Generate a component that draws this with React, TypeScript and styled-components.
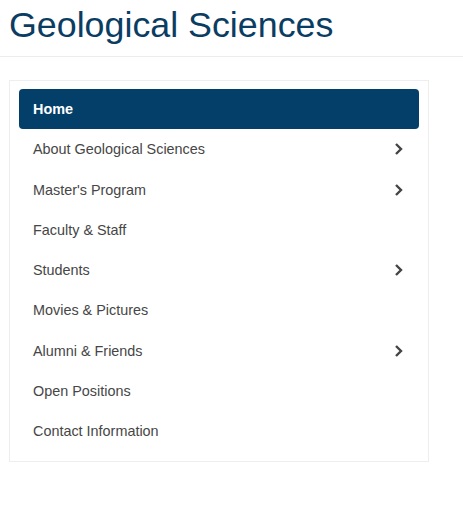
import React from 'react'
import styled, { createGlobalStyle } from 'styled-components'

const GlobalStyle = createGlobalStyle`
  html, body {
    margin: 0;
    padding: 0;
    background: #fff;
    font-family: "Liberation Sans", Arial, sans-serif;
  }
`

const Header = styled.header`
  padding: 4px 9px 10px;
  border-bottom: 1px solid #ececec;
`

const Title = styled.h1`
  margin: 0;
  font-size: 35.8px;
  font-weight: 400;
  line-height: 42px;
  color: #0b3d63;
`

const Main = styled.main`
  padding: 23px 34px 0 9px;
`

const NavCard = styled.nav`
  border: 1px solid #eeeeee;
  padding: 8px 9px 10px;
  display: flex;
  flex-direction: column;
`

const NavItem = styled.a<{ $active?: boolean }>`
  display: flex;
  align-items: center;
  justify-content: space-between;
  height: 40.25px;
  padding: 0 14px;
  border-radius: 4px;
  font-size: 14.4px;
  text-decoration: none;
  color: ${p => (p.$active ? '#ffffff' : '#464646')};
  background: ${p => (p.$active ? '#033f69' : 'transparent')};
  font-weight: ${p => (p.$active ? 600 : 400)};
`

const Chevron = () => (
  <svg width="10" height="14" viewBox="0 0 10 14" style={{ marginRight: 2 }}>
    <polyline points="3,2 8,7 3,12" fill="none" stroke="#444" strokeWidth="2.4" />
  </svg>
)

const items: { label: string; sub?: boolean }[] = [
  { label: 'About Geological Sciences', sub: true },
  { label: "Master's Program", sub: true },
  { label: 'Faculty & Staff' },
  { label: 'Students', sub: true },
  { label: 'Movies & Pictures' },
  { label: 'Alumni & Friends', sub: true },
  { label: 'Open Positions' },
  { label: 'Contact Information' }
]

const App = () => {
  return (
    <>
      <GlobalStyle />
      <Header>
        <Title>Geological Sciences</Title>
      </Header>
      <Main>
        <NavCard>
          <NavItem $active href="#">Home</NavItem>
          {items.map(it => (
            <NavItem key={it.label} href="#">
              <span>{it.label}</span>
              {it.sub && <Chevron />}
            </NavItem>
          ))}
        </NavCard>
      </Main>
    </>
  )
}

export default App
